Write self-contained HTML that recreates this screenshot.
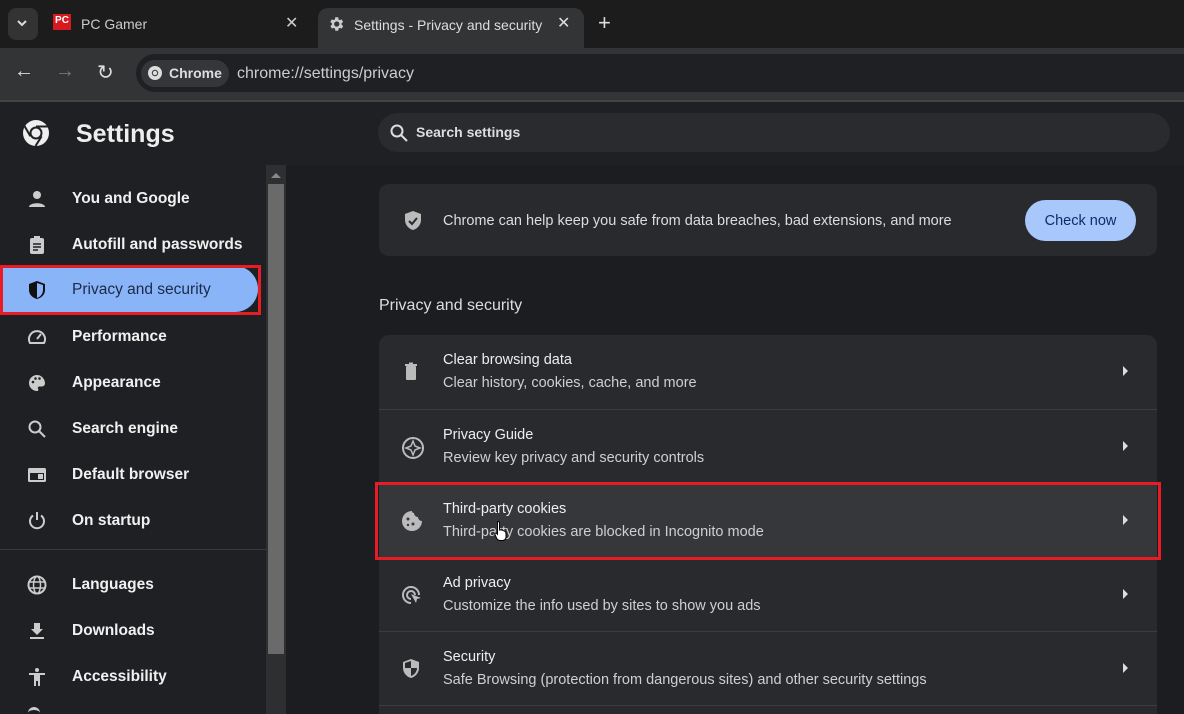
<!DOCTYPE html>
<html><head><meta charset="utf-8"><style>
*{box-sizing:border-box;margin:0;padding:0}
html,body{width:1184px;height:714px;overflow:hidden}
body{background:#1f2023;font-family:"Liberation Sans",sans-serif;color:#e3e3e3;position:relative}
.abs{position:absolute}
.tabstrip{left:0;top:0;width:1184px;height:48px;background:#1c1c1c}
.toolbar{left:0;top:48px;width:1184px;height:52px;background:#333436}
.tab{top:8px;height:40px;border-radius:10px 10px 0 0;font-size:14px;display:flex;align-items:center}
.side{left:0;top:165px;width:266px;height:549px;background:#1f2023}
.item{position:absolute;left:0;width:266px;height:46px;display:flex;align-items:center;font-size:15.5px;font-weight:bold;color:#f0f0f0}
.item svg{position:absolute;left:27px}
.item span{position:absolute;left:72px}
.card{background:#292a2d;border-radius:10px}
.row{position:absolute;left:0;width:778px;height:74px;border-top:1px solid #3c3d40}
.row .t{position:absolute;left:64px;top:17px;font-size:14.5px;color:#eee}
.row .s{position:absolute;left:64px;top:40px;font-size:14.5px;color:#cfcfcf}
.row svg.ic{position:absolute;left:22px;top:26px}
.row .ch{position:absolute;left:744px;top:31px;width:0;height:0;border-top:5px solid transparent;border-bottom:5px solid transparent;border-left:5px solid #ddd}
</style></head><body>
<div class="abs tabstrip"></div>
<div class="abs" style="left:8px;top:8px;width:30px;height:32px;background:#333;border-radius:8px"></div>
<svg class="abs" style="left:16px;top:18px" width="12" height="10"><path d="M2 3l4 4 4-4" stroke="#ddd" stroke-width="2" fill="none"/></svg>
<div class="abs" style="left:53px;top:14px;width:18px;height:16px;background:#d71920;color:#fff;font-size:10px;font-weight:bold;line-height:14px;text-align:center">PC</div>
<div class="abs" style="left:81px;top:16px;font-size:14px;color:#ccc">PC Gamer</div>
<div class="abs" style="left:285px;top:13px;font-size:16px;color:#ccc">✕</div>
<div class="abs tab" style="left:318px;width:266px;background:#333436"></div>
<svg class="abs" style="left:327px;top:15px" width="18" height="18" viewBox="0 0 24 24"><path fill="#ccc" d="M19.4 13a7.5 7.5 0 000-2l2.1-1.6-2-3.5-2.5 1a7 7 0 00-1.7-1L15 3h-4l-.4 2.9a7 7 0 00-1.7 1l-2.5-1-2 3.5L6.6 11a7.5 7.5 0 000 2l-2.1 1.6 2 3.5 2.5-1a7 7 0 001.7 1L11 21h4l.4-2.9a7 7 0 001.7-1l2.5 1 2-3.5zM13 15.5a3.5 3.5 0 110-7 3.5 3.5 0 010 7z"/></svg>
<div class="abs" style="left:354px;top:17px;font-size:14px;color:#ddd">Settings - Privacy and security</div>
<div class="abs" style="left:557px;top:13px;font-size:16px;color:#ddd">✕</div>
<div class="abs" style="left:598px;top:10px;font-size:22px;color:#ddd">+</div>
<div class="abs toolbar"></div>
<div class="abs" style="left:14px;top:60px;font-size:20px;color:#ddd">←</div>
<div class="abs" style="left:55px;top:60px;font-size:20px;color:#777">→</div>
<div class="abs" style="left:97px;top:60px;font-size:20px;color:#ddd">↻</div>
<div class="abs" style="left:136px;top:54px;width:1048px;height:38px;background:#1f2023;border-radius:19px 0 0 19px"></div>
<div class="abs" style="left:141px;top:60px;width:88px;height:27px;background:#35363a;border-radius:14px"></div>
<svg class="abs" style="left:147px;top:65px" width="16" height="16" viewBox="0 0 16 16"><circle cx="8" cy="8" r="7" fill="#ddd"/><circle cx="8" cy="8" r="3.2" fill="#35363a"/><circle cx="8" cy="8" r="2.2" fill="#ddd"/></svg>
<div class="abs" style="left:169px;top:65px;font-size:14px;font-weight:bold;color:#ddd">Chrome</div>
<div class="abs" style="left:237px;top:65px;font-size:16px;color:#ccc">chrome://settings/privacy</div>
<div class="abs" style="left:0;top:100px;width:1184px;height:65px;background:#1f2023;border-top:2px solid #444"></div>
<svg class="abs" style="left:22px;top:119px" width="28" height="28" viewBox="0 0 28 28"><circle cx="14" cy="14" r="13" fill="#eee"/><circle cx="14" cy="14" r="6.5" fill="#1f2023"/><circle cx="14" cy="14" r="4.5" fill="#eee"/><path d="M14 7.5h12M8.4 17.3L2.5 7M19.6 17.3L13.5 27" stroke="#1f2023" stroke-width="2"/></svg>
<div class="abs" style="left:76px;top:120px;font-size:25px;font-weight:bold;color:#eee">Settings</div>
<div class="abs" style="left:378px;top:113px;width:792px;height:39px;background:#2a2b2e;border-radius:20px"></div>
<svg class="abs" style="left:390px;top:124px" width="18" height="18" viewBox="0 0 18 18"><circle cx="7" cy="7" r="5.5" stroke="#ddd" stroke-width="2" fill="none"/><path d="M11 11l6 6" stroke="#ddd" stroke-width="2"/></svg>
<div class="abs" style="left:416px;top:124px;font-size:14px;font-weight:bold;color:#ddd">Search settings</div>
<div class="abs" style="left:0;top:165px;width:1184px;height:549px;background:#1c1d20"></div>
<div class="abs side"></div>
<div class="abs" style="left:266px;top:165px;width:20px;height:549px;background:#2e2f31"></div>
<div class="abs" style="left:268px;top:184px;width:16px;height:470px;background:#6a6a6a"></div>
<div class="abs" style="left:271px;top:173px;border-left:5px solid transparent;border-right:5px solid transparent;border-bottom:5px solid #888;width:0;height:0"></div>
<div class="abs" style="left:2px;top:266px;width:256px;height:46px;background:#8ab4f8;border-radius:0 23px 23px 0"></div>
<div class="abs" style="left:0;top:265px;width:261px;height:50px;border:3px solid #e81c24"></div>
<div class="abs" style="left:0;top:549px;width:266px;height:1px;background:#3a3b3e"></div>
<div class="item" style="top:176px"><svg width="20" height="20" viewBox="0 0 20 20"><circle cx="10" cy="6" r="4" fill="#ccc"/><path d="M2 18c0-5 16-5 16 0z" fill="#ccc"/></svg><span>You and Google</span></div>
<div class="item" style="top:222px"><svg width="20" height="20" viewBox="0 0 20 20"><rect x="3" y="3" width="14" height="16" rx="2" fill="#ccc"/><rect x="7" y="1" width="6" height="4" fill="#ccc"/><path d="M6 9h8M6 12h8M6 15h5" stroke="#1f2023" stroke-width="1.5"/></svg><span>Autofill and passwords</span></div>
<div class="item" style="top:267px;color:#1a2a48;font-weight:normal"><svg width="20" height="20" viewBox="0 0 20 20"><path d="M10 1l8 3v6c0 5-4 8-8 9-4-1-8-4-8-9V4z" fill="#111"/><path d="M10 3v15c3-1 6-4 6-8V5z" fill="#8ab4f8"/></svg><span>Privacy and security</span></div>
<div class="item" style="top:314px"><svg width="20" height="20" viewBox="0 0 20 20"><path d="M3 16a8 8 0 1114 0z" stroke="#ccc" stroke-width="2" fill="none"/><path d="M10 12l4-5" stroke="#ccc" stroke-width="2"/></svg><span>Performance</span></div>
<div class="item" style="top:360px"><svg width="20" height="20" viewBox="0 0 20 20"><path d="M10 2a8 8 0 000 16c1.5 0 1.5-1.5 1-2.5s0-2 1.5-2H15a3 3 0 003-3c0-4.5-3.5-8.5-8-8.5z" fill="#ccc"/><circle cx="6" cy="9" r="1.3" fill="#1f2023"/><circle cx="8.5" cy="5.5" r="1.3" fill="#1f2023"/><circle cx="12.5" cy="5.5" r="1.3" fill="#1f2023"/></svg><span>Appearance</span></div>
<div class="item" style="top:406px"><svg width="20" height="20" viewBox="0 0 20 20"><circle cx="8" cy="8" r="5.5" stroke="#ccc" stroke-width="2" fill="none"/><path d="M12 12l6 6" stroke="#ccc" stroke-width="2"/></svg><span>Search engine</span></div>
<div class="item" style="top:452px"><svg width="20" height="20" viewBox="0 0 20 20"><rect x="1" y="3" width="18" height="14" rx="1.5" fill="#ccc"/><rect x="3" y="8" width="14" height="7" fill="#1f2023"/><rect x="11" y="9" width="5" height="5" fill="#ccc"/></svg><span>Default browser</span></div>
<div class="item" style="top:498px"><svg width="20" height="20" viewBox="0 0 20 20"><path d="M6 4.5a7 7 0 108 0" stroke="#ccc" stroke-width="2" fill="none"/><path d="M10 1v8" stroke="#ccc" stroke-width="2"/></svg><span>On startup</span></div>
<div class="item" style="top:562px"><svg width="20" height="20" viewBox="0 0 20 20"><circle cx="10" cy="10" r="8.5" stroke="#ccc" stroke-width="2" fill="none"/><ellipse cx="10" cy="10" rx="3.5" ry="8.5" stroke="#ccc" stroke-width="1.5" fill="none"/><path d="M2 7h16M2 13h16" stroke="#ccc" stroke-width="1.5"/></svg><span>Languages</span></div>
<div class="item" style="top:608px"><svg width="20" height="20" viewBox="0 0 20 20"><path d="M7 2h6v6h3l-6 6-6-6h3z" fill="#ccc"/><rect x="3" y="16" width="14" height="2" fill="#ccc"/></svg><span>Downloads</span></div>
<div class="item" style="top:654px"><svg width="20" height="20" viewBox="0 0 20 20"><circle cx="10" cy="3" r="2" fill="#ccc"/><path d="M2 6h16v2h-5v11h-2v-5H9v5H7V8H2z" fill="#ccc"/></svg><span>Accessibility</span></div>
<div class="abs" style="left:28px;top:707px;width:12px;height:7px;border-top:3px solid #ccc;border-radius:6px 6px 0 0"></div>
<div class="abs card" style="left:379px;top:184px;width:778px;height:72px"></div>
<svg class="abs" style="left:403px;top:210px" width="20" height="22" viewBox="0 0 20 22"><path d="M10 1l8 3v6c0 5-4 9-8 10-4-1-8-5-8-10V4z" fill="#bbb"/><path d="M6 11l3 3 5-6" stroke="#292a2d" stroke-width="2" fill="none"/></svg>
<div class="abs" style="left:443px;top:213px;font-size:14.5px;color:#ddd">Chrome can help keep you safe from data breaches, bad extensions, and more</div>
<div class="abs" style="left:1025px;top:200px;width:111px;height:41px;background:#a8c7fa;border-radius:21px;color:#0b2e6a;font-size:14.5px;text-align:center;line-height:43px">Check now</div>
<div class="abs" style="left:379px;top:297px;font-size:16px;color:#ddd">Privacy and security</div>
<div class="abs card" style="left:379px;top:335px;width:778px;height:379px;overflow:hidden;border-radius:10px 10px 0 0">
<div class="row" style="top:0;border-top:none"><svg class="ic" width="20" height="22" viewBox="0 0 20 22"><rect x="5" y="5" width="10" height="14" rx="1" fill="#bbb"/><rect x="4" y="3" width="12" height="2" fill="#bbb"/><rect x="8" y="1.5" width="4" height="2" fill="#bbb"/></svg><div class="t">Clear browsing data</div><div class="s">Clear history, cookies, cache, and more</div><div class="ch"></div></div>
<div class="row" style="top:74px"><svg class="ic" width="24" height="24" viewBox="0 0 24 24"><circle cx="12" cy="12" r="10" stroke="#bbb" stroke-width="2" fill="none"/><path d="M12 5l2 5 5 2-5 2-2 5-2-5-5-2 5-2z" stroke="#bbb" stroke-width="1.5" fill="none"/></svg><div class="t">Privacy Guide</div><div class="s">Review key privacy and security controls</div><div class="ch"></div></div>
<div class="row" style="top:148px;background:#36373a"><svg class="ic" width="22" height="22" viewBox="0 0 22 22"><path d="M11 1a10 10 0 1010 10 4 4 0 01-4-4 4 4 0 01-4-4 2 2 0 01-2-2z" fill="#bbb"/><circle cx="7" cy="9" r="1.5" fill="#36373a"/><circle cx="12" cy="14" r="1.5" fill="#36373a"/><circle cx="7" cy="15" r="1.2" fill="#36373a"/></svg><div class="t">Third-party cookies</div><div class="s">Third-party cookies are blocked in Incognito mode</div><div class="ch"></div></div>
<div class="row" style="top:222px"><svg class="ic" width="22" height="22" viewBox="0 0 22 22"><path d="M10 19a8 8 0 118-8" stroke="#bbb" stroke-width="2" fill="none"/><path d="M10 15a4 4 0 114-4" stroke="#bbb" stroke-width="2" fill="none"/><path d="M10 10l10 4-4 1-1 4z" fill="#bbb"/></svg><div class="t">Ad privacy</div><div class="s">Customize the info used by sites to show you ads</div><div class="ch"></div></div>
<div class="row" style="top:296px"><svg class="ic" width="20" height="22" viewBox="0 0 20 22"><path d="M10 1l8 3v6c0 5-4 9-8 10-4-1-8-5-8-10V4z" fill="#bbb"/><path d="M10 3v7H4V5zM10 10h6c0 4-3 7-6 8z" fill="#292a2d"/></svg><div class="t">Security</div><div class="s">Safe Browsing (protection from dangerous sites) and other security settings</div><div class="ch"></div></div>
<div class="row" style="top:370px;height:9px"></div>
</div>
<div class="abs" style="left:375px;top:482px;width:786px;height:78px;border:3px solid #e81c24"></div>
<svg class="abs" style="left:494px;top:520px" width="14" height="22" viewBox="0 0 14 22"><path d="M4 1.5c1 0 1.5.6 1.5 1.5v7l1-.2 1 .2 1 .3 1 .4c1.5.5 2.5 1.5 2.5 3V17c0 2-1.5 3.5-3.5 3.5H6c-1.5 0-2.5-1-3.3-2L1 14.5c-.5-1 .5-2 1.5-1.2l1 1V3c0-1 .3-1.5.5-1.5z" fill="#fff" stroke="#000" stroke-width="1"/></svg>
</body></html>
